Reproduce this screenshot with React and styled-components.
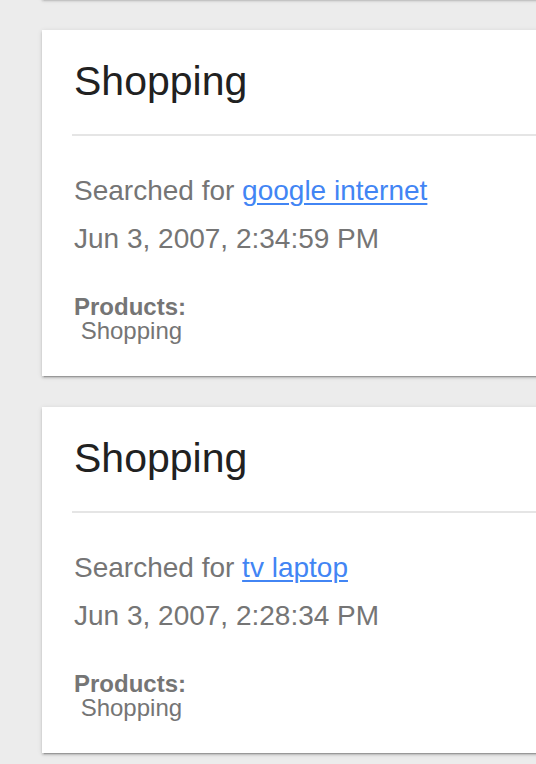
import React from 'react';
import styled, { createGlobalStyle } from 'styled-components';

const GlobalStyle = createGlobalStyle`
    html, body {
        margin: 0;
        padding: 0;
        background-color: #ececec;
        overflow: hidden;
    }
`

const Page = styled.div`
    width: 536px;
    height: 764px;
    overflow: hidden;
    font-family: "Liberation Sans", Arial, sans-serif;
`

const List = styled.div`
    margin: -347px 0 0 42px;

    display: flex;
    flex-direction: column;
    gap: 31px;
`

const Card = styled.div`
    width: 640px;
    height: 346px;
    box-sizing: border-box;
    padding: 27px 0 0 32px;

    display: flex;
    flex-direction: column;

    background-color: #ffffff;
    box-shadow: 0 2px 2px 0 rgba(0, 0, 0, 0.14), 0 3px 1px -2px rgba(0, 0, 0, 0.2), 0 1px 5px 0 rgba(0, 0, 0, 0.12);
`

const Title = styled.div`
    margin: 0 0 29px 0;

    font-size: 41px;
    line-height: 48px;
    color: #212121;
`

const Divider = styled.div`
    height: 2px;
    margin-left: -2px;
    background-color: #e5e5e5;
`

const Line = styled.div`
    font-size: 28px;
    line-height: 48px;
    color: #757575;

    &:first-of-type {
        margin-top: 31px;
    }
`

const Query = styled.a`
    color: #4285f4;
    text-decoration: underline;
    text-underline-offset: 3px;
    text-decoration-thickness: 2px;
`

const Products = styled.div`
    margin-top: 32px;

    font-size: 24px;
    line-height: 24px;
    color: #757575;
    white-space: pre;
`

const Label = styled.div`
    font-weight: bold;
`

const activities = [
    { query: 'google internet', time: 'Jun 3, 2007, 2:34:59 PM' },
    { query: 'tv laptop', time: 'Jun 3, 2007, 2:28:34 PM' },
];

export default class App extends React.Component {
    render() {
        return (
            <Page>
                <GlobalStyle />
                <List>
                    <Card />
                {
                    activities.map((item, i) => {
                        return (
                            <Card key={i}>
                                <Title>Shopping</Title>
                                <Divider />
                                <div>
                                    <Line>Searched for <Query href="#">{item.query}</Query></Line>
                                    <Line>{item.time}</Line>
                                </div>
                                <Products>
                                    <Label>Products:</Label>
                                    <div> Shopping</div>
                                </Products>
                            </Card>
                        );
                    })
                }
                </List>
            </Page>
        )
    }
}
